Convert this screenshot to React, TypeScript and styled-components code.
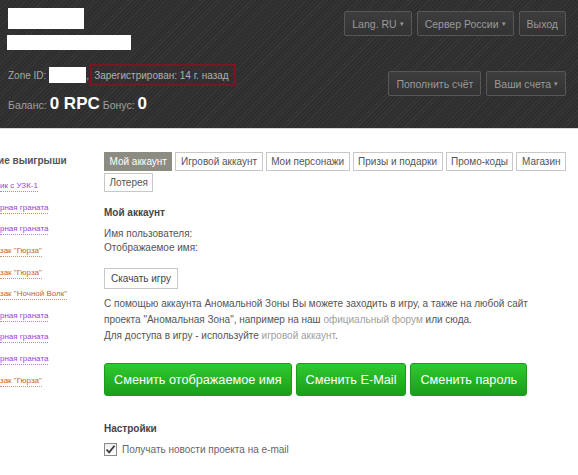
import * as React from 'react';
import styled, { createGlobalStyle } from 'styled-components';

const Global = createGlobalStyle`
  html, body {
    margin: 0;
    padding: 0;
    background: #fff;
    font-family: "Liberation Sans", Arial, sans-serif;
    overflow: hidden;
  }
`;

const Page = styled.div`
  width: 578px;
  min-height: 475px;
  display: flex;
  flex-direction: column;
`;

const Header = styled.div`
  height: 129px;
  box-sizing: border-box;
  padding: 8px 12px 0 7px;
  display: flex;
  justify-content: space-between;
  background-color: #323232;
  background-image: repeating-linear-gradient(
    -45deg,
    #373737 0px,
    #373737 1px,
    #2e2e2e 1px,
    #2e2e2e 3px
  );
  border-bottom: 1px solid #d8d8d8;
`;

const HeaderLeft = styled.div`
  display: flex;
  flex-direction: column;
`;

const Redacted = styled.div<{ w: number; h: number; shift?: number }>`
  width: ${p => p.w}px;
  height: ${p => p.h}px;
  margin-left: ${p => p.shift || 0}px;
  background: #fff;
`;

const Brand = styled.div`
  display: flex;
  flex-direction: column;
  gap: 6px;
`;

const ZoneRow = styled.div`
  margin-top: 14px;
  display: flex;
  align-items: center;
  font-size: 10px;
  color: #a8a8a8;
  padding-left: 1px;
`;

const ZoneId = styled.div`
  width: 37px;
  height: 16px;
  background: #fff;
  margin-left: 3px;
`;

const Registered = styled.div`
  margin-left: 1px;
  height: 18px;
  padding: 0 5px 0 2px;
  display: flex;
  align-items: center;
  border: 2px solid #7d1424;
  color: #b0b0b0;
`;

const BalanceRow = styled.div`
  margin-top: 8px;
  display: flex;
  align-items: baseline;
  gap: 3px;
  color: #a0a0a0;
  font-size: 10.5px;
  padding-left: 1px;
`;

const Big = styled.span`
  color: #fff;
  font-weight: bold;
  font-size: 17px;
`;

const HeaderRight = styled.div`
  display: flex;
  flex-direction: column;
  align-items: flex-end;
  gap: 35px;
  padding-top: 3px;
`;

const BtnRow = styled.div`
  display: flex;
  gap: 5px;
`;

const DarkBtn = styled.div`
  height: 25px;
  box-sizing: border-box;
  padding: 0 7px;
  display: flex;
  align-items: center;
  border: 1px solid #575757;
  border-radius: 2px;
  background: linear-gradient(#3d3d3d, #333333);
  color: #9a9a9a;
  font-size: 10.5px;
  white-space: nowrap;
`;

const Caret = styled.span`
  margin-left: 3px;
  font-size: 7px;
`;

const Body = styled.div`
  display: flex;
  padding-top: 23px;
`;

const Sidebar = styled.div`
  width: 104px;
  flex-shrink: 0;
  overflow: hidden;
`;

const SideTitle = styled.div`
  font-size: 10px;
  font-weight: bold;
  color: #555;
  margin-left: -2px;
  padding-top: 3px;
  height: 21px;
  white-space: nowrap;
`;

const WinRow = styled.div`
  height: 21.6px;
  display: flex;
  align-items: center;
`;

const Win = styled.a<{ kind: 'item' | 'bag' }>`
  font-size: 8px;
  line-height: 10px;
  white-space: nowrap;
  color: ${p => (p.kind === 'item' ? '#9b3fd6' : '#c8612e')};
  text-decoration: none;
  border-bottom: 1px dotted ${p => (p.kind === 'item' ? '#b57fe0' : '#d8906a')};
`;

const Main = styled.div`
  flex: 1;
  display: flex;
  flex-direction: column;
  color: #555;
  font-size: 10px;
`;

const Tabs = styled.div`
  display: flex;
  flex-wrap: wrap;
  gap: 2px 3px;
  width: 470px;
`;

const Tab = styled.div<{ active?: boolean }>`
  height: 19px;
  box-sizing: border-box;
  padding: 0 4.5px;
  display: flex;
  align-items: center;
  font-size: 10px;
  white-space: nowrap;
  border: 1px solid ${p => (p.active ? '#8c8c82' : '#c8c8c8')};
  background: ${p => (p.active ? '#8c8c82' : '#fff')};
  color: ${p => (p.active ? '#fff' : '#555')};
`;

const SectionTitle = styled.div`
  font-weight: bold;
  color: #444;
  font-size: 10px;
  margin-top: 15px;
`;

const Fields = styled.div`
  margin-top: 9px;
  line-height: 14px;
`;

const PlainBtn = styled.div`
  align-self: flex-start;
  margin-top: 13px;
  height: 21px;
  box-sizing: border-box;
  padding: 0 6px;
  display: flex;
  align-items: center;
  border: 1px solid #c8c8c8;
  color: #444;
`;

const Para = styled.p`
  margin: 7px 0 0;
  line-height: 16px;
  color: #555;
`;

const Link = styled.a`
  color: #a0a0a0;
  text-decoration: none;
`;

const GreenRow = styled.div`
  display: flex;
  gap: 4px;
  margin-top: 19px;
`;

const GreenBtn = styled.div`
  height: 33px;
  box-sizing: border-box;
  padding: 0 9px;
  display: flex;
  align-items: center;
  border-radius: 3px;
  border: 1px solid #1c9a1c;
  background: linear-gradient(#2fc92f, #1b9e1b);
  color: #fff;
  font-size: 12.7px;
  white-space: nowrap;
`;

const Settings = styled(SectionTitle)`
  margin-top: 27px;
`;

const CheckRow = styled.label`
  margin-top: 9px;
  display: flex;
  align-items: center;
  gap: 5px;
  color: #666;
  font-size: 10px;
`;

const Box = styled.span`
  width: 13px;
  height: 13px;
  box-sizing: border-box;
  border: 1px solid #8a8a8a;
  background: linear-gradient(#f0f0f0, #fff);
  display: flex;
  align-items: center;
  justify-content: center;
`;

const wins: { text: string; kind: 'item' | 'bag' }[] = [
  { text: 'ик с УЗК-1', kind: 'item' },
  { text: 'рная граната', kind: 'item' },
  { text: 'рная граната', kind: 'item' },
  { text: 'зак "Гюрза"', kind: 'bag' },
  { text: 'зак "Гюрза"', kind: 'bag' },
  { text: 'зак "Ночной Волк"', kind: 'bag' },
  { text: 'рная граната', kind: 'item' },
  { text: 'рная граната', kind: 'item' },
  { text: 'рная граната', kind: 'item' },
  { text: 'зак "Гюрза"', kind: 'bag' },
];

const tabs = ['Мой аккаунт', 'Игровой аккаунт', 'Мои персонажи', 'Призы и подарки', 'Промо-коды', 'Магазин', 'Лотерея'];

export default function App() {
  return (
    <Page>
      <Global />
      <Header>
        <HeaderLeft>
          <Brand>
            <Redacted w={76} h={21} shift={1} />
            <Redacted w={124} h={15} />
          </Brand>
          <ZoneRow>
            Zone ID:
            <ZoneId />
            ,
            <Registered>Зарегистрирован: 14 г. назад</Registered>
          </ZoneRow>
          <BalanceRow>
            Баланс: <Big>0 RPC</Big> Бонус: <Big>0</Big>
          </BalanceRow>
        </HeaderLeft>
        <HeaderRight>
          <BtnRow>
            <DarkBtn>Lang. RU<Caret>▾</Caret></DarkBtn>
            <DarkBtn>Сервер России<Caret>▾</Caret></DarkBtn>
            <DarkBtn>Выход</DarkBtn>
          </BtnRow>
          <BtnRow>
            <DarkBtn>Пополнить счёт</DarkBtn>
            <DarkBtn>Ваши счета<Caret>▾</Caret></DarkBtn>
          </BtnRow>
        </HeaderRight>
      </Header>
      <Body>
        <Sidebar>
          <SideTitle>ие выигрыши</SideTitle>
          {wins.map((w, i) => (
            <WinRow key={i}>
              <Win kind={w.kind}>{w.text}</Win>
            </WinRow>
          ))}
        </Sidebar>
        <Main>
          <Tabs>
            {tabs.map((t, i) => (
              <Tab key={t} active={i === 0}>{t}</Tab>
            ))}
          </Tabs>
          <SectionTitle>Мой аккаунт</SectionTitle>
          <Fields>
            Имя пользователя:<br />
            Отображаемое имя:
          </Fields>
          <PlainBtn>Скачать игру</PlainBtn>
          <Para>
            С помощью аккаунта Аномальной Зоны Вы можете заходить в игру, а также на любой сайт<br />
            проекта "Аномальная Зона", например на наш <Link>официальный форум</Link> или сюда.<br />
            Для доступа в игру - используйте <Link>игровой аккаунт</Link>.
          </Para>
          <GreenRow>
            <GreenBtn>Сменить отображаемое имя</GreenBtn>
            <GreenBtn>Сменить E-Mail</GreenBtn>
            <GreenBtn>Сменить пароль</GreenBtn>
          </GreenRow>
          <Settings>Настройки</Settings>
          <CheckRow>
            <Box>
              <svg width="11" height="11" viewBox="0 0 11 11">
                <path d="M1.5 5.5 L4.2 8.3 L9.5 1.8" fill="none" stroke="#3a3a3a" strokeWidth="1.8" />
              </svg>
            </Box>
            Получать новости проекта на e-mail
          </CheckRow>
        </Main>
      </Body>
    </Page>
  );
}
